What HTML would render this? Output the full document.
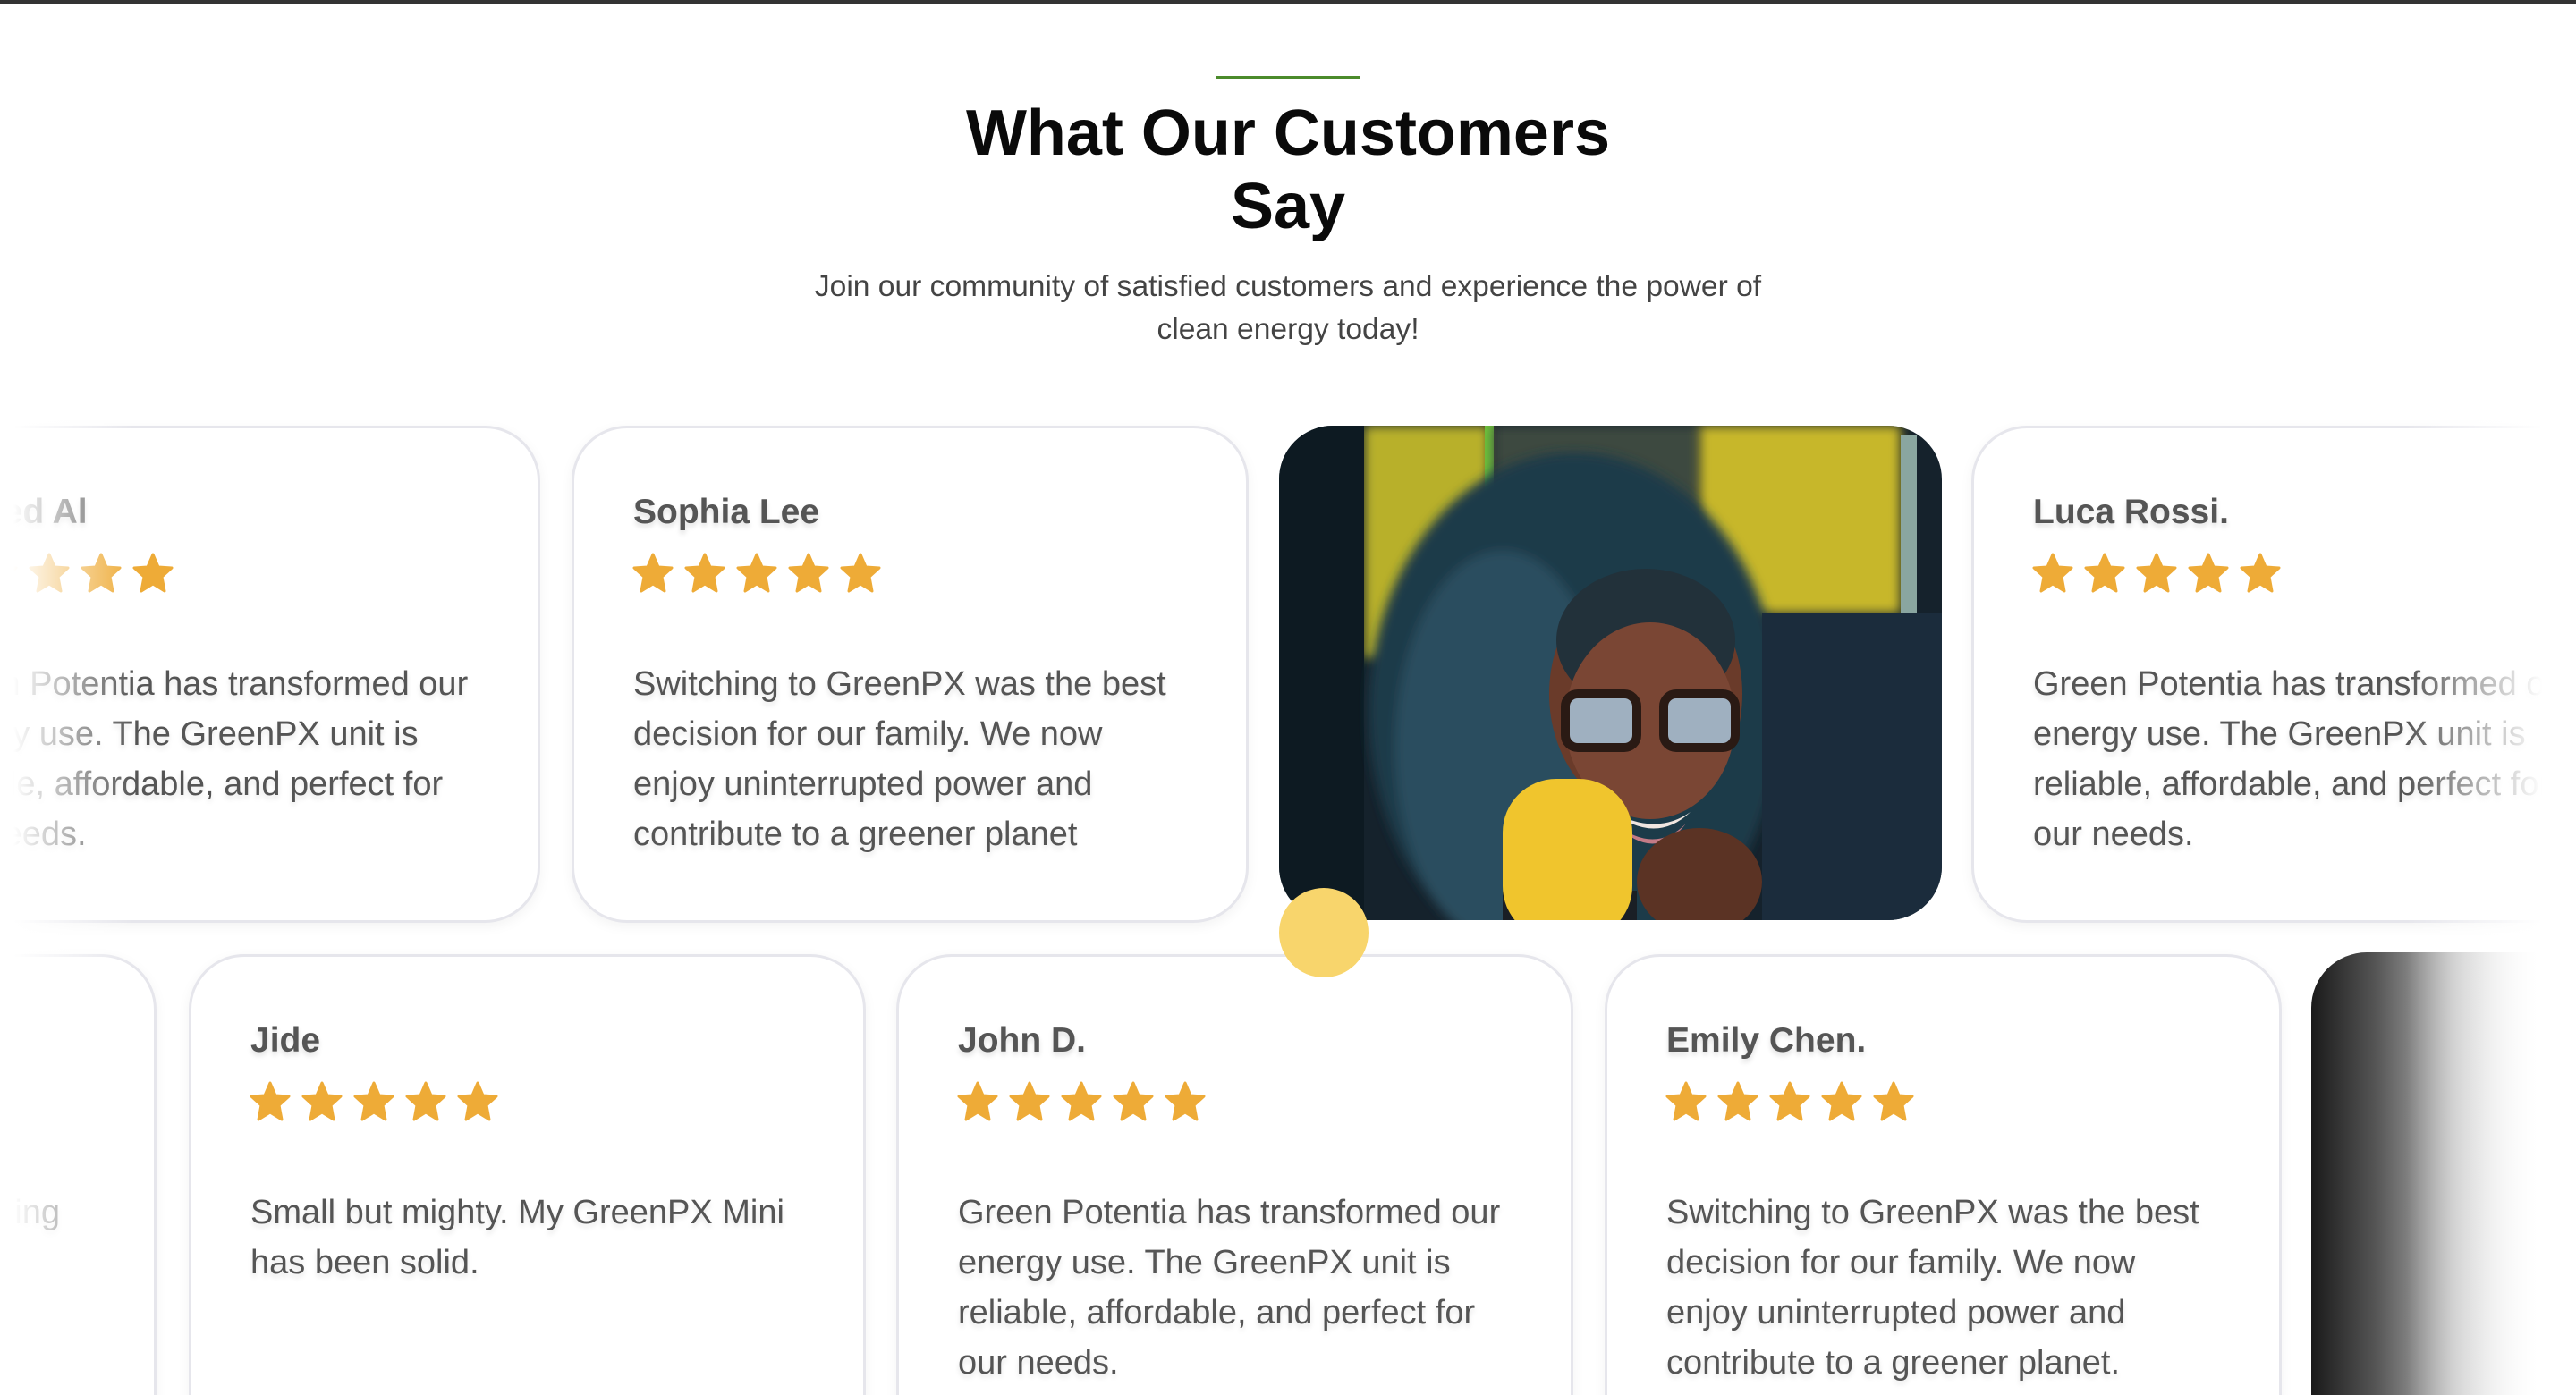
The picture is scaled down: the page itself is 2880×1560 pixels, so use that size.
<!DOCTYPE html>
<html><head><meta charset="utf-8">
<style>
html,body{margin:0;padding:0;background:#fff;width:2880px;height:1560px;overflow:hidden;}
body{position:relative;font-family:"Liberation Sans",sans-serif;}
.wrap{position:absolute;left:0;top:0;width:2880px;height:1560px;overflow:hidden;}
.topbar{position:absolute;left:0;top:0;width:2880px;height:4px;background:#333;}
.gl{position:absolute;left:1359px;top:85px;width:162px;height:3px;background:#4b8b2b;}
h1{position:absolute;left:0;top:108px;width:2880px;margin:0;text-align:center;font-size:72px;line-height:82px;font-weight:bold;color:#0a0a0a;}
.sub{position:absolute;left:0;top:297px;width:2880px;text-align:center;font-size:33.6px;line-height:48px;color:#444;}
.card{position:absolute;box-sizing:border-box;background:#fff;border:3px solid #e6e6ec;border-radius:62px;box-shadow:0 4px 14px rgba(0,0,0,0.05);}
.card .n{position:absolute;left:66px;top:72px;font-size:39px;font-weight:bold;color:#555;text-shadow:0 4px 6px rgba(0,0,0,.12);}
.card .s{position:absolute;left:64px;top:138px;display:flex;gap:10px;}
.card .t{position:absolute;left:66px;top:258px;font-size:38px;line-height:56px;color:#555;text-shadow:0 4px 6px rgba(0,0,0,.10);white-space:nowrap;}
.r1{top:476px;height:556px;}
.r2{top:1067px;height:560px;}
.dot{position:absolute;left:1430px;top:993px;width:100px;height:100px;border-radius:50%;background:#f8d56c;}
.fl{position:absolute;left:0;top:440px;width:150px;height:1120px;background:linear-gradient(to right,#fff 10%,rgba(255,255,255,0));}
.fr{position:absolute;left:2690px;top:440px;width:190px;height:1120px;background:linear-gradient(to right,rgba(255,255,255,0),#fff 80%);}
</style></head><body><div class="wrap">
<div class="topbar"></div>
<div class="gl"></div>
<h1>What Our Customers<br>Say</h1>
<div class="sub">Join our community of satisfied customers and experience the power of<br>clean energy today!</div>

<svg width="0" height="0" style="position:absolute"><defs><symbol id="st" viewBox="0 0 48 48"><path d="M24 3 L30 17 L45 18 L34 28 L37 44 L24 36 L11 44 L14 28 L3 18 L18 17 Z" fill="#eeab37" stroke="#eeab37" stroke-width="3" stroke-linejoin="round"/></symbol></defs></svg>

<div class="card r1" style="left:-152px;width:756px;">
 <div class="n">Ahmed Al</div>
 <div class="s"><svg width="48" height="48"><use href="#st"/></svg><svg width="48" height="48"><use href="#st"/></svg><svg width="48" height="48"><use href="#st"/></svg><svg width="48" height="48"><use href="#st"/></svg><svg width="48" height="48"><use href="#st"/></svg></div>
 <div class="t">Green Potentia has transformed our<br>energy use. The GreenPX unit is<br>reliable, affordable, and perfect for<br>our needs.</div>
</div>
<div class="card r1" style="left:639px;width:757px;">
 <div class="n">Sophia Lee</div>
 <div class="s"><svg width="48" height="48"><use href="#st"/></svg><svg width="48" height="48"><use href="#st"/></svg><svg width="48" height="48"><use href="#st"/></svg><svg width="48" height="48"><use href="#st"/></svg><svg width="48" height="48"><use href="#st"/></svg></div>
 <div class="t">Switching to GreenPX was the best<br>decision for our family. We now<br>enjoy uninterrupted power and<br>contribute to a greener planet</div>
</div>
<div style="position:absolute;left:1430px;top:476px;width:741px;height:553px;border-radius:60px;overflow:hidden;">
<svg width="741" height="553" viewBox="0 0 741 553">
 <defs><filter id="bl"><feGaussianBlur stdDeviation="6"/></filter></defs>
 <rect width="741" height="553" fill="#15222c"/>
 <rect x="95" y="0" width="140" height="260" fill="#b8b02a" filter="url(#bl)"/>
 <rect x="230" y="0" width="10" height="120" fill="#6cc03a"/>
 <rect x="240" y="0" width="230" height="150" fill="#3c4a40" filter="url(#bl)"/>
 <rect x="470" y="0" width="225" height="210" fill="#c7b72c" filter="url(#bl)"/>
 <rect x="695" y="10" width="18" height="210" fill="#8aa6a0"/>
 <rect x="0" y="0" width="95" height="553" fill="#0d1a22"/>
 <g filter="url(#bl)">
 <ellipse cx="330" cy="320" rx="230" ry="290" fill="#1f3a4a"/>
 <ellipse cx="250" cy="360" rx="120" ry="220" fill="#2c4d5e"/>
 </g>
 <ellipse cx="410" cy="300" rx="108" ry="135" fill="#6a3b2a"/>
 <ellipse cx="410" cy="240" rx="100" ry="80" fill="#22313a"/>
 <ellipse cx="415" cy="330" rx="95" ry="110" fill="#7a4634"/>
 <rect x="320" y="300" width="80" height="60" rx="14" fill="#9fb0c0" stroke="#2a1a14" stroke-width="10"/>
 <rect x="430" y="300" width="80" height="60" rx="14" fill="#9fb0c0" stroke="#2a1a14" stroke-width="10"/>
 <path d="M370 430 Q420 460 460 432 Q420 470 370 430Z" fill="#f0e6e0"/>
 <path d="M375 445 Q420 480 455 445 Q420 490 375 445Z" fill="#c47b86"/>
 <rect x="540" y="210" width="201" height="343" fill="#1b2c3c"/>
 <ellipse cx="470" cy="510" rx="70" ry="60" fill="#5b3324"/>
 <rect x="250" y="520" width="150" height="60" fill="#1a1f25"/>
 <rect x="250" y="395" width="145" height="180" rx="60" fill="#f0c52d"/>
</svg>
</div>
<div class="card r1" style="left:2204px;width:757px;">
 <div class="n">Luca Rossi.</div>
 <div class="s"><svg width="48" height="48"><use href="#st"/></svg><svg width="48" height="48"><use href="#st"/></svg><svg width="48" height="48"><use href="#st"/></svg><svg width="48" height="48"><use href="#st"/></svg><svg width="48" height="48"><use href="#st"/></svg></div>
 <div class="t">Green Potentia has transformed our<br>energy use. The GreenPX unit is<br>reliable, affordable, and perfect for<br>our needs.</div>
</div>

<div class="card r2" style="left:-582px;width:757px;overflow:hidden;">
 <div class="t" style="left:auto;right:105px;text-align:right;">I love everything</div>
</div>
<div class="card r2" style="left:211px;width:757px;">
 <div class="n">Jide</div>
 <div class="s"><svg width="48" height="48"><use href="#st"/></svg><svg width="48" height="48"><use href="#st"/></svg><svg width="48" height="48"><use href="#st"/></svg><svg width="48" height="48"><use href="#st"/></svg><svg width="48" height="48"><use href="#st"/></svg></div>
 <div class="t">Small but mighty. My GreenPX Mini<br>has been solid.</div>
</div>
<div class="card r2" style="left:1002px;width:757px;">
 <div class="n">John D.</div>
 <div class="s"><svg width="48" height="48"><use href="#st"/></svg><svg width="48" height="48"><use href="#st"/></svg><svg width="48" height="48"><use href="#st"/></svg><svg width="48" height="48"><use href="#st"/></svg><svg width="48" height="48"><use href="#st"/></svg></div>
 <div class="t">Green Potentia has transformed our<br>energy use. The GreenPX unit is<br>reliable, affordable, and perfect for<br>our needs.</div>
</div>
<div class="card r2" style="left:1794px;width:757px;">
 <div class="n">Emily Chen.</div>
 <div class="s"><svg width="48" height="48"><use href="#st"/></svg><svg width="48" height="48"><use href="#st"/></svg><svg width="48" height="48"><use href="#st"/></svg><svg width="48" height="48"><use href="#st"/></svg><svg width="48" height="48"><use href="#st"/></svg></div>
 <div class="t">Switching to GreenPX was the best<br>decision for our family. We now<br>enjoy uninterrupted power and<br>contribute to a greener planet.</div>
</div>
<div style="position:absolute;left:2584px;top:1065px;width:400px;height:560px;border-radius:62px;background:linear-gradient(to right,#1a1a1a 0%,#555 18%,#bbb 40%,#fff 65%);"></div>

<div class="dot"></div>
<div class="fl"></div>
<div class="fr"></div>
</div></body></html>
